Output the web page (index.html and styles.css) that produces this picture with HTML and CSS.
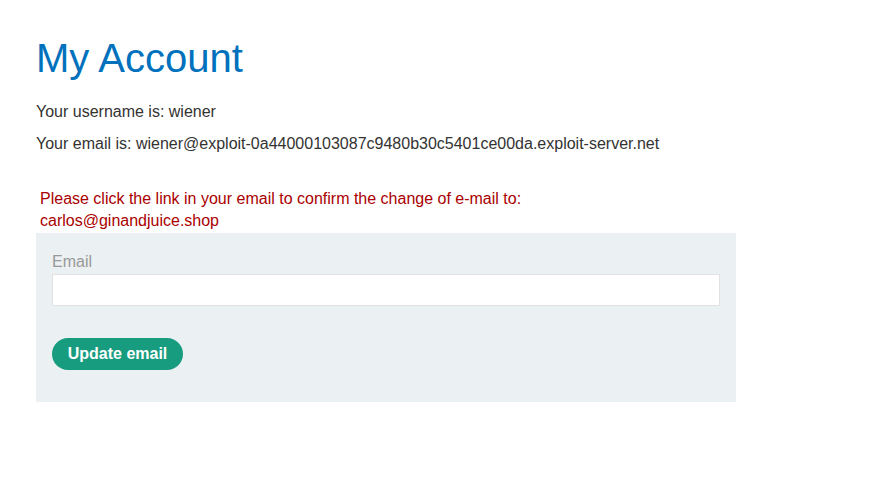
FILE: index.html
```html
<!DOCTYPE html>
<html>
<head>
<meta charset="utf-8">
<link rel="stylesheet" href="styles.css">
</head>
<body>
<div class="page">
  <h1 class="title">My Account</h1>
  <p class="info">Your username is: wiener</p>
  <p class="info">Your email is: wiener@exploit-0a44000103087c9480b30c5401ce00da.exploit-server.net</p>
  <p class="notice">Please click the link in your email to confirm the change of e-mail to:<br>carlos@ginandjuice.shop</p>
  <form class="form">
    <label class="label">Email</label>
    <input class="input" type="email" name="email">
    <button class="button" type="button">Update email</button>
  </form>
</div>
</body>
</html>
```
FILE: styles.css
```css
html, body {
  margin: 0;
  padding: 0;
  background: #fff;
}
body {
  font-family: "Liberation Sans", Arial, sans-serif;
  color: #333332;
  font-size: 16px;
}
.page {
  padding: 35px 36px 0 36px;
}
.title {
  margin: 0 0 22px 0;
  font-size: 40px;
  font-weight: normal;
  line-height: 46px;
  color: #0071bc;
}
.info {
  margin: 0 0 14px 0;
  line-height: 18px;
}
.notice {
  margin: 35px 0 1px 4px;
  line-height: 22px;
  color: #aa0000;
  width: 520px;
}
.form {
  width: 700px;
  box-sizing: border-box;
  background: #ebf0f2;
  padding: 18px 16px 32px 16px;
  display: flex;
  flex-direction: column;
  align-items: flex-start;
}
.label {
  color: #999;
  line-height: 22px;
  margin-bottom: 1px;
}
.input {
  width: 100%;
  height: 32px;
  box-sizing: border-box;
  border: 1px solid #e2e2e2;
  background: #fff;
  margin: 0 0 32px 0;
  padding: 0 8px;
}
.button {
  height: 32px;
  width: 131px;
  border: none;
  border-radius: 16px;
  background: #189c80;
  color: #fff;
  font-family: "Liberation Sans", Arial, sans-serif;
  font-size: 16px;
  font-weight: bold;
  padding: 0;
}
```
